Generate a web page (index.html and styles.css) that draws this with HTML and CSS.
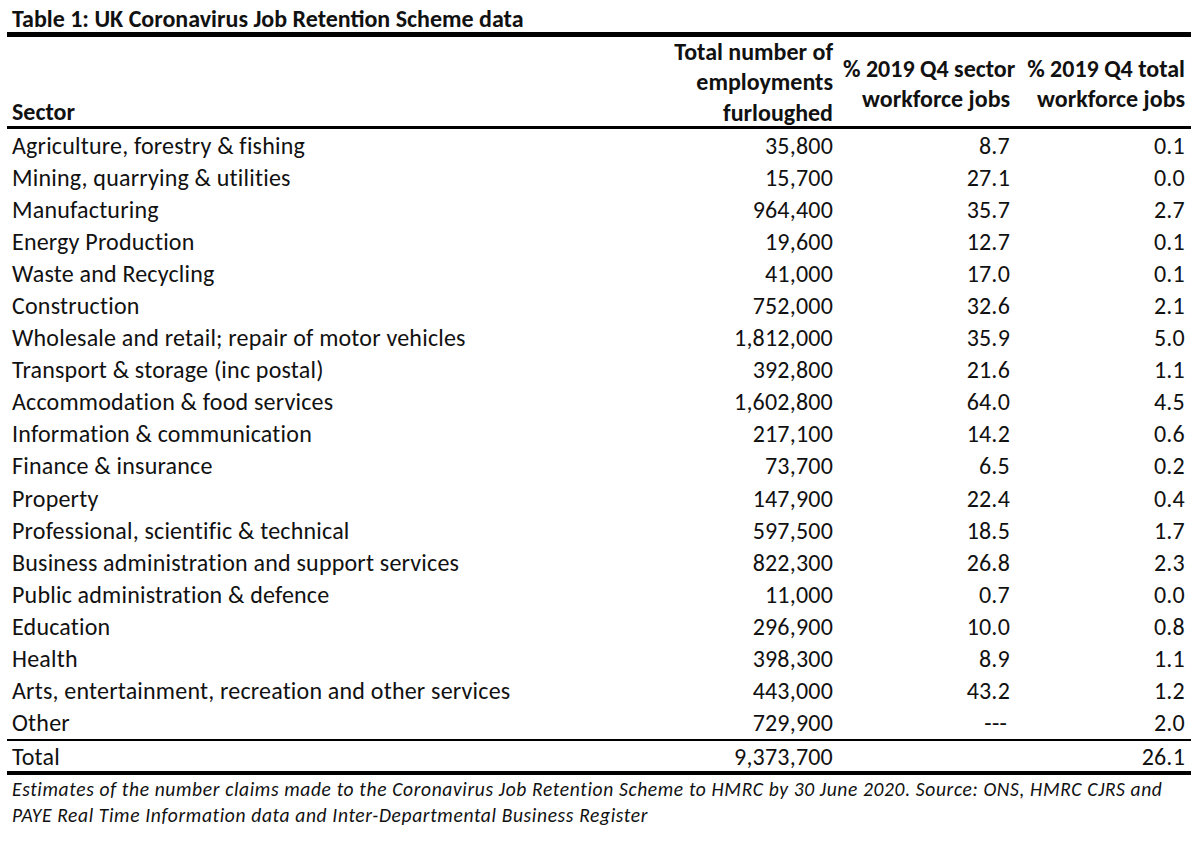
FILE: index.html
```html
<!DOCTYPE html>
<html lang="en">
<head>
<meta charset="utf-8">
<title>Table 1: UK Coronavirus Job Retention Scheme data</title>
<link rel="stylesheet" href="styles.css">
</head>
<body>
<div class="page">
  <div class="title">Table 1: UK Coronavirus Job Retention Scheme data</div>
  <div class="table">
    <div class="row head">
      <div class="cell sector">Sector</div>
      <div class="cell num">Total number of<br>employments<br>furloughed</div>
      <div class="cell num mid">% 2019 Q4 sector<br>workforce jobs</div>
      <div class="cell num mid last">% 2019 Q4 total<br>workforce jobs</div>
    </div>
    <div class="body">
      <div class="row"><div class="cell">Agriculture, forestry &amp; fishing</div><div class="cell num">35,800</div><div class="cell num">8.7</div><div class="cell num last">0.1</div></div>
      <div class="row"><div class="cell">Mining, quarrying &amp; utilities</div><div class="cell num">15,700</div><div class="cell num">27.1</div><div class="cell num last">0.0</div></div>
      <div class="row"><div class="cell">Manufacturing</div><div class="cell num">964,400</div><div class="cell num">35.7</div><div class="cell num last">2.7</div></div>
      <div class="row"><div class="cell">Energy Production</div><div class="cell num">19,600</div><div class="cell num">12.7</div><div class="cell num last">0.1</div></div>
      <div class="row"><div class="cell">Waste and Recycling</div><div class="cell num">41,000</div><div class="cell num">17.0</div><div class="cell num last">0.1</div></div>
      <div class="row"><div class="cell">Construction</div><div class="cell num">752,000</div><div class="cell num">32.6</div><div class="cell num last">2.1</div></div>
      <div class="row"><div class="cell">Wholesale and retail; repair of motor vehicles</div><div class="cell num">1,812,000</div><div class="cell num">35.9</div><div class="cell num last">5.0</div></div>
      <div class="row"><div class="cell">Transport &amp; storage (inc postal)</div><div class="cell num">392,800</div><div class="cell num">21.6</div><div class="cell num last">1.1</div></div>
      <div class="row"><div class="cell">Accommodation &amp; food services</div><div class="cell num">1,602,800</div><div class="cell num">64.0</div><div class="cell num last">4.5</div></div>
      <div class="row"><div class="cell">Information &amp; communication</div><div class="cell num">217,100</div><div class="cell num">14.2</div><div class="cell num last">0.6</div></div>
      <div class="row"><div class="cell">Finance &amp; insurance</div><div class="cell num">73,700</div><div class="cell num">6.5</div><div class="cell num last">0.2</div></div>
      <div class="row"><div class="cell">Property</div><div class="cell num">147,900</div><div class="cell num">22.4</div><div class="cell num last">0.4</div></div>
      <div class="row"><div class="cell">Professional, scientific &amp; technical</div><div class="cell num">597,500</div><div class="cell num">18.5</div><div class="cell num last">1.7</div></div>
      <div class="row"><div class="cell">Business administration and support services</div><div class="cell num">822,300</div><div class="cell num">26.8</div><div class="cell num last">2.3</div></div>
      <div class="row"><div class="cell">Public administration &amp; defence</div><div class="cell num">11,000</div><div class="cell num">0.7</div><div class="cell num last">0.0</div></div>
      <div class="row"><div class="cell">Education</div><div class="cell num">296,900</div><div class="cell num">10.0</div><div class="cell num last">0.8</div></div>
      <div class="row"><div class="cell">Health</div><div class="cell num">398,300</div><div class="cell num">8.9</div><div class="cell num last">1.1</div></div>
      <div class="row"><div class="cell">Arts, entertainment, recreation and other services</div><div class="cell num">443,000</div><div class="cell num">43.2</div><div class="cell num last">1.2</div></div>
      <div class="row"><div class="cell">Other</div><div class="cell num">729,900</div><div class="cell num dash">---</div><div class="cell num last">2.0</div></div>
    </div>
    <div class="row total"><div class="cell">Total</div><div class="cell num">9,373,700</div><div class="cell num"></div><div class="cell num last">26.1</div></div>
  </div>
  <p class="note">Estimates of the number claims made to the Coronavirus Job Retention Scheme to HMRC by 30 June 2020. Source: ONS, HMRC CJRS and<br>PAYE Real Time Information data and Inter-Departmental Business Register</p>
</div>
</body>
</html>
```

FILE: styles.css
```css
html, body {
  margin: 0;
  padding: 0;
  background: #ffffff;
}

body {
  font-family: Carlito, Lato, "Liberation Sans", sans-serif;
  color: #111111;
  width: 1200px;
  height: 841px;
  overflow: hidden;
}

.page {
  padding: 0 9px 0 7px;
}

.title {
  font-size: 24px;
  font-weight: 700;
  line-height: 27px;
  padding: 5px 0 0 5px;
  border-bottom: 5px solid #000;
}

.row {
  display: grid;
  grid-template-columns: 1fr 178px 177px 176px;
}

.head {
  height: 89px;
  border-bottom: 3px solid #000;
}

.head .cell {
  font-weight: 700;
  line-height: 30.3px;
  font-size: 24px;
  letter-spacing: 0;
}

.head .sector {
  align-self: end;
  line-height: 26px;
  padding-bottom: 3px;
}

.head .mid {
  align-self: center;
  padding-top: 3px;
}

.cell {
  padding: 0 5px;
  font-size: 24px;
  letter-spacing: 0.2px;
  line-height: 28px;
  white-space: nowrap;
}

.body .row {
  height: 32.1px;
}

.body .cell {
  padding-top: 2.5px;
}

.total .cell {
  padding-top: 2px;
}

.num {
  text-align: right;
}

.num.last {
  padding-right: 6px;
}

.dash {
  padding-right: 8px;
}

.body {
  border-bottom: 2px solid #000;
}

.total {
  height: 30px;
  border-bottom: 4px solid #000;
}

.note {
  margin: 0;
  padding: 1px 0 0 5px;
  font-size: 19.5px;
  letter-spacing: 0.65px;
  font-style: italic;
  line-height: 26.7px;
  white-space: nowrap;
}
```
